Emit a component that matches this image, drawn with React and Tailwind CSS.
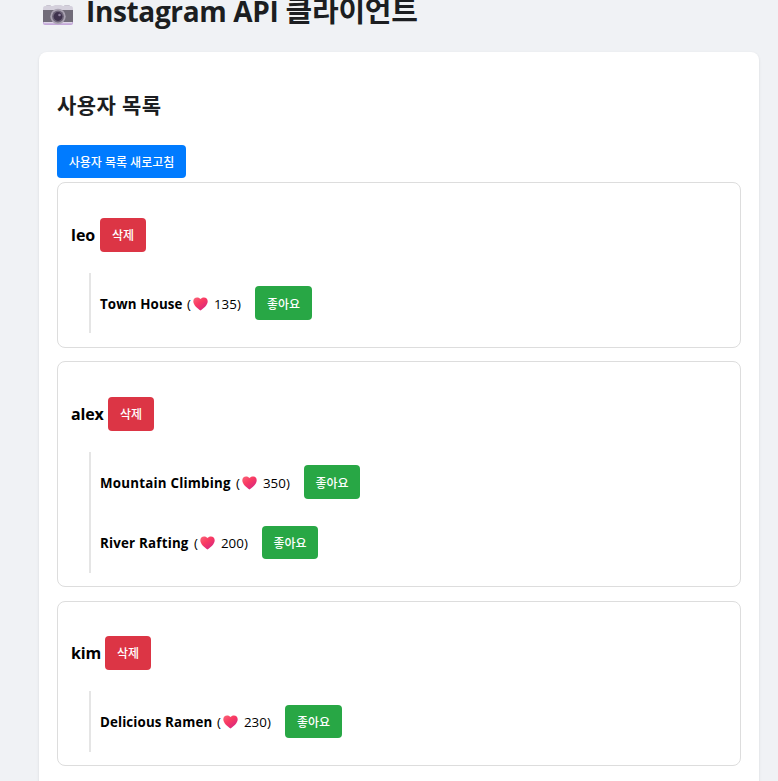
const users = [
  {
    name: 'leo', nameWidth: 'w-[29px]', card: 'h-[166px] mb-[13px] pt-[35px]', rail: 'h-[60px]',
    posts: [{ title: 'Town House', likes: 135, titleWidth: 'w-[86px] tracking-[0.12px]', row: 'h-[60px]', text: 'pt-[3px]', button: 'w-[57px] h-[34px]' }],
  },
  {
    name: 'alex', nameWidth: 'w-[37px] tracking-[-0.2px]', card: 'h-[226px] mb-[14px] pt-[35px]', rail: 'h-[121px]',
    posts: [
      { title: 'Mountain Climbing', likes: 350, titleWidth: 'w-[135px] tracking-[0.22px]', row: 'h-[60px]', text: 'pt-[3px]', button: 'w-[56px] h-[34px]' },
      { title: 'River Rafting', likes: 200, titleWidth: 'w-[93px] tracking-[0.2px]', row: 'h-[61px]', text: 'pt-[2px]', button: 'w-[56px] h-[33px]' },
    ],
  },
  {
    name: 'kim', nameWidth: 'w-[34px] tracking-[-0.2px]', card: 'h-[165px] pt-[34px]', rail: 'h-[61px]',
    posts: [{ title: 'Delicious Ramen', likes: 230, titleWidth: 'w-[116px] tracking-[0.12px]', row: 'h-[61px]', text: 'pt-[2px]', button: 'w-[57px] h-[33px]' }],
  },
];

function Camera() {
  return (
    <svg className="mt-[4px] h-[22px] w-[30px] shrink-0" viewBox="0 0 30 22">
      <rect x="3" y="1" width="5" height="4" rx="1" fill="#c9c5d1" />
      <rect x="21" y="1" width="6" height="4" rx="1" fill="#c9c5d1" />
      <path d="M2 2H10L12 1H18L20 2H28Q30 2 30 5V6H0V5Q0 2 2 2Z" fill="#d4d0dc" />
      <rect y="6" width="30" height="13" fill="#716c79" />
      <path d="M0 18H30V19Q30 21 28 21H2Q0 21 0 19Z" fill="#c3a7d8" />
      <rect x="1" y="18" width="28" height="1.3" fill="#ded6e7" />
      <circle cx="15" cy="12.5" r="7.7" fill="#aaa3b2" />
      <circle cx="15" cy="12.5" r="5.9" fill="#6d6478" />
      <circle cx="15" cy="12.5" r="4.4" fill="#3f334e" />
      <circle cx="16.5" cy="11" r="1.3" fill="#8f819e" />
    </svg>
  );
}

function Heart() {
  return (
    <svg className="mx-px mt-px h-[14px] w-[15px] shrink-0" viewBox="0 0 15 14">
      <defs>
        <linearGradient id="heart" x1="0" y1="0" x2="0.8" y2="1">
          <stop offset="0" stopColor="#f9677a" />
          <stop offset="0.45" stopColor="#f93a62" />
          <stop offset="1" stopColor="#d42483" />
        </linearGradient>
      </defs>
      <path d="M7.5 13.6C4.8 11.6 0.3 8.3 0.3 4.3C0.3 1.9 1.9 0.5 4 0.5C5.6 0.5 6.8 1.1 7.5 2C8.2 1.1 9.4 0.5 11 0.5C13.1 0.5 14.7 1.9 14.7 4.3C14.7 8.3 10.2 11.6 7.5 13.6Z" fill="url(#heart)" />
    </svg>
  );
}

function Post({ post }) {
  return (
    <li className={`flex items-center whitespace-nowrap text-[13.33px] ${post.row}`}>
      <strong className={`font-bold ${post.titleWidth} ${post.text}`}>{post.title}</strong>
      <span className={`w-[6px] pl-px ${post.text}`}>(</span>
      <Heart />
      <span className={`ml-[5px] w-[41px] ${post.text}`}>{post.likes})</span>
      <button className={`rounded-[4px] bg-[#28a745] pt-[3px] text-[12px] font-medium text-white ${post.button}`}>좋아요</button>
    </li>
  );
}

function UserCard({ user }) {
  return (
    <section className={`rounded-[8px] border border-[#dddddd] pl-[13px] ${user.card}`}>
      <h3 className="flex h-[34px] items-center text-[16px] font-bold">
        <span className={user.nameWidth}>{user.name}</span>
        <button className="h-[34px] w-[46px] rounded-[4px] bg-[#dc3545] pt-[2px] text-[12px] font-medium text-white">삭제</button>
      </h3>
      <ul className={`mt-[21px] ml-[18px] border-l-2 border-[#e5e5e5] pl-[9px] ${user.rail}`}>
        {user.posts.map((post) => <Post key={post.title} post={post} />)}
      </ul>
    </section>
  );
}

export default function App() {
  return (
    <div className="h-[781px] overflow-hidden bg-[#f0f2f5] pr-[19px] pl-[39px] font-['Open_Sans','Noto_Sans_CJK_KR',sans-serif] text-black">
      <h1 className="flex h-[52px] items-start pl-[4px] text-[28px] leading-[22px] font-bold whitespace-nowrap text-[#1c1e21]">
        <Camera />
        <span className="ml-[13px] tracking-[-0.35px]">Instagram API <span className="text-[29px] tracking-[-0.2px]">클라이언트</span></span>
      </h1>
      <main className="h-[760px] rounded-[8px] bg-white px-[18px] pt-[38px] shadow-[0_1px_3px_rgba(0,0,0,0.1)]">
        <h2 className="h-[55px] text-[21px] leading-[30px] font-bold tracking-[0.4px] text-[#1c1e21]">사용자 목록</h2>
        <button className="mb-[4px] block h-[33px] w-[129px] rounded-[4px] bg-[#007bff] pt-[3px] text-[12px] font-medium whitespace-nowrap text-white">사용자 목록 새로고침</button>
        {users.map((user) => <UserCard key={user.name} user={user} />)}
      </main>
    </div>
  );
}
